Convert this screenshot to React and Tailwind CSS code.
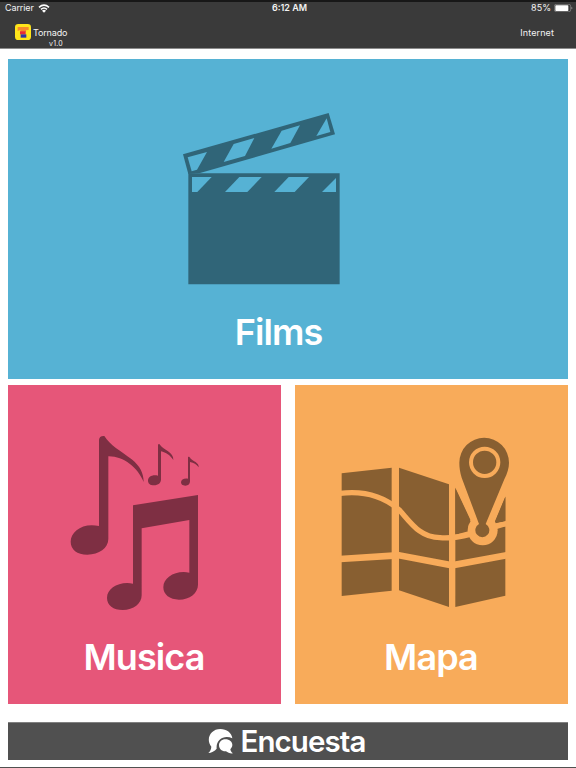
function ClapperIcon() {
  return (
    <svg className="block h-[190px] w-[172px]" viewBox="0 0 516 570" aria-hidden="true">
      <path fill="#306578" d="M37 208H491V541H37Z" />
      <path fill="#306578" d="M21 151 458 27 477 91 72 207 37 210Z" />
      <g fill="#56b2d4">
        <path d="M48 219H107L64 264H48Z" />
        <path d="M190 219H257L214 264H147Z" />
        <path d="M338 219H399L356 264H295Z" />
        <path d="M480 222V264H438Z" />
        <path d="M35 160 93 144 63 197 47 202Z" />
        <path d="M173 120 235 102 207 156 143 174Z" />
        <path d="M317 80 372 64 343 117 286 134Z" />
        <path d="M452 43 463 84 421 96Z" />
      </g>
    </svg>
  );
}

function MusicIcon() {
  return (
    <svg className="block h-[190px] w-[150px]" viewBox="0 0 450 570" aria-hidden="true">
      <g fill="#7e2f43">
        <path d="M117 45C117 37 123 32 133 33C150 61 181 77 215 103C240 123 251 145 251 171C233 127 190 93 145 94V342C145 369 117 389 82 389C51 389 32 373 32 350C32 319 69 292 117 303Z" />
        <path d="M294 59C296 56 299 57 301 61C309 73 342 82 340 105C330 90 318 83 303 79V163C303 174 295 181 282 181C270 181 264 175 264 167C264 155 277 148 294 152Z" />
        <path d="M384 97C386 94 389 96 391 100C398 109 418 113 416 127C409 117 402 113 390 111V169C390 177 385 182 376 182C367 182 363 178 363 172C363 163 373 159 384 161Z" />
        <path d="M219 241 414 210V479C414 504 389 524 357 524C329 524 310 509 310 487C310 457 347 435 388 443V285L245 310V511C245 536 221 555 188 555C160 555 141 541 141 519C141 489 178 468 219 476Z" />
      </g>
    </svg>
  );
}

function MapIcon() {
  return (
    <svg className="block h-[190px] w-[190px]" viewBox="0 0 570 570" aria-hidden="true">
      <g fill="#885f31">
        <path d="M35 145 185 128V497L35 513Z" />
        <path d="M207 128 357 178V546L207 496Z" />
        <path d="M376 188 526 215V512L376 546Z" />
      </g>
      <g fill="none" stroke="#f8ab5a">
        <path strokeWidth="16" d="M30 205C110 195 163 216 207 254C240 289 268 338 330 338C375 342 406 331 440 323C475 315 500 301 530 296" />
        <path strokeWidth="20" d="M30 402 190 392 207 391 366 421 530 391" />
      </g>
      <path fill="#f8ab5a" d="M372 182V170H530V206L493 296H425Z" />
      <path fill="#885f31" d="M376 188 421 284C416 291 414 298 413 307L376 328Z" />
      <path fill="#885f31" d="M526 215V287L497 295 495 289Z" />
      <circle cx="458" cy="316" r="45" fill="#f8ab5a" />
      <path fill="#885f31" d="M388 113A74.500 74.500 0 0 1 537 113C537 130 532 144 523 163L467 297A21 21 0 1 1 447 297L395 158C390 141 388 128 388 113Z" />
      <circle cx="464" cy="112" r="41" fill="none" stroke="#f8ab5a" strokeWidth="12" />
      <path fill="none" stroke="#f8ab5a" strokeWidth="14" d="M370 338 425 323M498 302 530 296" />
    </svg>
  );
}

function ChatIcon() {
  return (
    <svg className="block h-[26px] w-[25px]" viewBox="0 0 75 78" aria-hidden="true">
      <path fill="#fff" d="M37 3C56 3 71 14 73 31C50 19 23 34 26 62C20 69 10 75 1 75C7 70 9 64 10 56C-8 33 8 3 37 3Z" />
      <path fill="#fff" d="M52 34C65 34 73 42 73 51C73 56 70 60 67 64C68 69 70 73 75 76C67 77 59 74 54 70C41 71 33 62 33 52C33 42 41 34 52 34Z" />
    </svg>
  );
}

function Header() {
  return (
    <header className="h-[49px] border-t-2 border-b border-t-[#171717] border-b-[#8b8b8b] bg-[#3a3a3a] text-[#f3f3f3]">
      <div className="grid h-3 grid-cols-3 items-center px-[5px] text-[9px] leading-3">
        <div className="flex items-center gap-1">
          <span className="tracking-[-0.1px]">Carrier</span>
          <svg className="h-[9px] w-3" viewBox="0 0 36 27" aria-hidden="true">
            <g fill="none" stroke="#fff" strokeWidth="5">
              <path d="M3 10Q18-3 33 10" />
              <path d="M9 16Q18 8 27 16" />
            </g>
            <path fill="#fff" d="M12 20Q18 15 24 20L18 26Z" />
          </svg>
        </div>
        <span className="pl-[3px] text-center font-semibold">6:12 AM</span>
        <div className="-mr-0.5 flex items-center justify-end gap-[3px]">
          <span>85%</span>
          <svg className="h-2 w-[19px]" viewBox="0 0 57 24" aria-hidden="true">
            <rect x="1" y="1" width="49" height="22" rx="5" fill="none" stroke="#8d8d8d" strokeWidth="2" />
            <rect x="4" y="4" width="39" height="17" rx="2" fill="#fff" />
            <path fill="#8d8d8d" d="M52 8Q59 12 52 16Z" />
          </svg>
        </div>
      </div>
      <div className="flex justify-between pt-[9px] pr-[22px] pl-[15px] text-[9px]">
        <div className="flex gap-0.5">
          <svg className="mt-px h-4 w-4" viewBox="0 0 48 48" aria-hidden="true">
            <rect width="48" height="48" rx="10" fill="#ffe51a" />
            <path fill="#f58a2c" d="M8 9H41V18L33 19V24H16V18L8 21Z" />
            <path fill="#e82b38" d="M15 22H32V31H15Z" />
            <path fill="#3034a5" d="M17 31H34V41H17Z" />
          </svg>
          <div className="pt-[3px]">
            <p className="leading-[13px] tracking-[-0.15px]">Tornado</p>
            <p className="pl-4 text-[7px] leading-[9px] tracking-[0.2px]">v1.0</p>
          </div>
        </div>
        <span className="pt-[3px] leading-[13px] tracking-[0.1px]">Internet</span>
      </div>
    </header>
  );
}

export default function App() {
  return (
    <div className="flex h-screen w-full flex-col overflow-hidden bg-white font-['Inter',sans-serif]">
      <Header />
      <main className="flex flex-1 flex-col px-2 pt-2.5">
        <section className="h-[320px] bg-[#56b2d4] pt-[45px]">
          <div className="pl-[168px]"><ClapperIcon /></div>
          <h2 className="mt-[14px] pr-[19px] text-center text-[36px] leading-[48px] font-semibold tracking-[-0.9px] text-white">Films</h2>
        </section>
        <div className="mt-1.5 grid h-[319px] grid-cols-2 gap-[14px]">
          <section className="bg-[#e65679] pt-10">
            <div className="pl-[52px]"><MusicIcon /></div>
            <h2 className="mt-[18px] pr-px text-center text-[36px] leading-[48px] font-semibold tracking-[-0.9px] text-white">Musica</h2>
          </section>
          <section className="bg-[#f8ab5a] pt-10">
            <div className="pl-[35px]"><MapIcon /></div>
            <h2 className="mt-[18px] pr-px text-center text-[36px] leading-[48px] font-semibold tracking-[-0.9px] text-white">Mapa</h2>
          </section>
        </div>
        <button className="mt-[18px] flex h-[38px] items-center justify-center gap-[7px] border-t border-[#808080] bg-[#505050] pr-0.5 pb-px text-white">
          <ChatIcon />
          <span className="text-[29.500px] leading-[37px] font-semibold tracking-[-0.9px]">Encuesta</span>
        </button>
      </main>
      <footer className="h-px bg-[#505050]" />
    </div>
  );
}
